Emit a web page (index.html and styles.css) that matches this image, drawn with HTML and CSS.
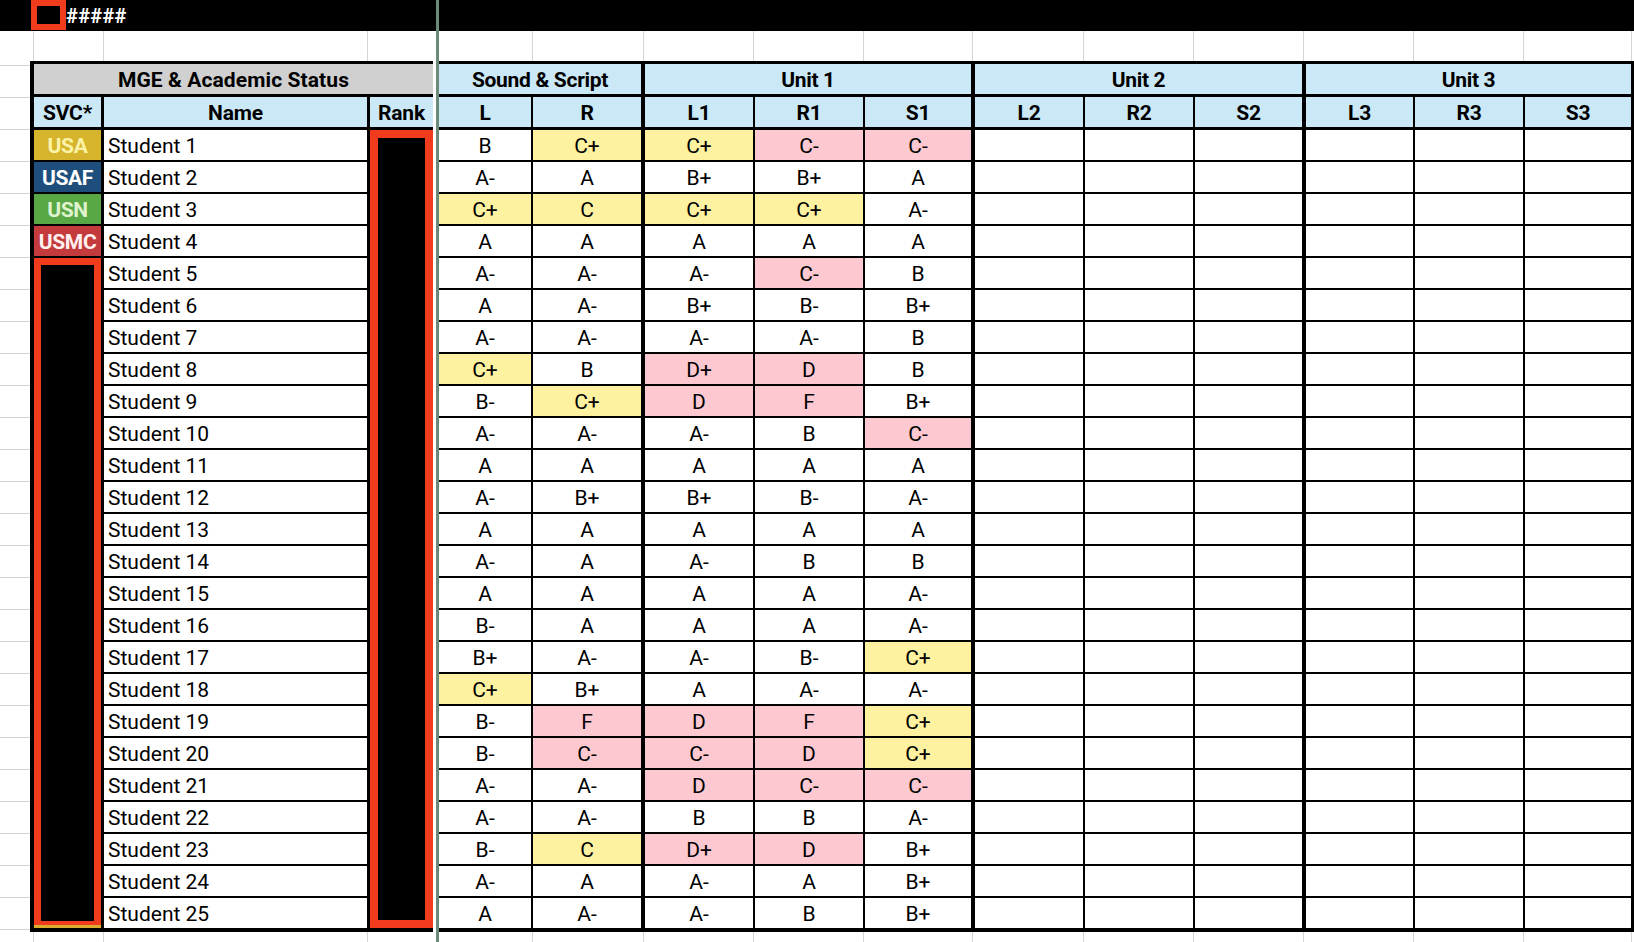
FILE: index.html
```html
<!DOCTYPE html>
<html lang="en">
<head>
<meta charset="utf-8">
<title>MGE &amp; Academic Status</title>
<link rel="stylesheet" href="styles.css">
</head>
<body>
<div class="sheet">
  <section class="pane pane-left">
    <div class="topbar"><span class="redact-mini"></span><span class="hashes">#####</span></div>
    <div class="pane-body">
      <div class="col-a"></div>
      <div class="mge">
        <div class="row"><div class="title">MGE &amp; Academic Status</div></div>
        <div class="row"><div class="hd svc-col">SVC*</div><div class="hd name-col">Name</div><div class="hd rank-col">Rank</div></div>
        <div class="row"><div class="svc usa">USA</div><div class="name">Student 1</div><div class="rank-redact"></div></div>
        <div class="row"><div class="svc usaf">USAF</div><div class="name">Student 2</div></div>
        <div class="row"><div class="svc usn">USN</div><div class="name">Student 3</div></div>
        <div class="row"><div class="svc usmc">USMC</div><div class="name">Student 4</div></div>
        <div class="row"><div class="svc-redact"></div><div class="name">Student 5</div></div>
        <div class="row"><div class="name">Student 6</div></div>
        <div class="row"><div class="name">Student 7</div></div>
        <div class="row"><div class="name">Student 8</div></div>
        <div class="row"><div class="name">Student 9</div></div>
        <div class="row"><div class="name">Student 10</div></div>
        <div class="row"><div class="name">Student 11</div></div>
        <div class="row"><div class="name">Student 12</div></div>
        <div class="row"><div class="name">Student 13</div></div>
        <div class="row"><div class="name">Student 14</div></div>
        <div class="row"><div class="name">Student 15</div></div>
        <div class="row"><div class="name">Student 16</div></div>
        <div class="row"><div class="name">Student 17</div></div>
        <div class="row"><div class="name">Student 18</div></div>
        <div class="row"><div class="name">Student 19</div></div>
        <div class="row"><div class="name">Student 20</div></div>
        <div class="row"><div class="name">Student 21</div></div>
        <div class="row"><div class="name">Student 22</div></div>
        <div class="row"><div class="name">Student 23</div></div>
        <div class="row"><div class="name">Student 24</div></div>
        <div class="row"><div class="name">Student 25</div></div>
      </div>
    </div>
  </section>

  <section class="pane pane-right">
    <div class="topbar"></div>
    <div class="pane-body">
      <div class="grades">
        <div class="row groups"><div class="span2">Sound &amp; Script</div><div class="span3">Unit 1</div><div class="span3">Unit 2</div><div class="span3">Unit 3</div></div>
        <div class="row heads"><div>L</div><div>R</div><div>L1</div><div>R1</div><div>S1</div><div>L2</div><div>R2</div><div>S2</div><div>L3</div><div>R3</div><div>S3</div></div>
        <div class="row"><div>B</div><div class="y">C+</div><div class="y">C+</div><div class="p">C-</div><div class="p">C-</div><div></div><div></div><div></div><div></div><div></div><div></div></div>
        <div class="row"><div>A-</div><div>A</div><div>B+</div><div>B+</div><div>A</div><div></div><div></div><div></div><div></div><div></div><div></div></div>
        <div class="row"><div class="y">C+</div><div class="y">C</div><div class="y">C+</div><div class="y">C+</div><div>A-</div><div></div><div></div><div></div><div></div><div></div><div></div></div>
        <div class="row"><div>A</div><div>A</div><div>A</div><div>A</div><div>A</div><div></div><div></div><div></div><div></div><div></div><div></div></div>
        <div class="row"><div>A-</div><div>A-</div><div>A-</div><div class="p">C-</div><div>B</div><div></div><div></div><div></div><div></div><div></div><div></div></div>
        <div class="row"><div>A</div><div>A-</div><div>B+</div><div>B-</div><div>B+</div><div></div><div></div><div></div><div></div><div></div><div></div></div>
        <div class="row"><div>A-</div><div>A-</div><div>A-</div><div>A-</div><div>B</div><div></div><div></div><div></div><div></div><div></div><div></div></div>
        <div class="row"><div class="y">C+</div><div>B</div><div class="p">D+</div><div class="p">D</div><div>B</div><div></div><div></div><div></div><div></div><div></div><div></div></div>
        <div class="row"><div>B-</div><div class="y">C+</div><div class="p">D</div><div class="p">F</div><div>B+</div><div></div><div></div><div></div><div></div><div></div><div></div></div>
        <div class="row"><div>A-</div><div>A-</div><div>A-</div><div>B</div><div class="p">C-</div><div></div><div></div><div></div><div></div><div></div><div></div></div>
        <div class="row"><div>A</div><div>A</div><div>A</div><div>A</div><div>A</div><div></div><div></div><div></div><div></div><div></div><div></div></div>
        <div class="row"><div>A-</div><div>B+</div><div>B+</div><div>B-</div><div>A-</div><div></div><div></div><div></div><div></div><div></div><div></div></div>
        <div class="row"><div>A</div><div>A</div><div>A</div><div>A</div><div>A</div><div></div><div></div><div></div><div></div><div></div><div></div></div>
        <div class="row"><div>A-</div><div>A</div><div>A-</div><div>B</div><div>B</div><div></div><div></div><div></div><div></div><div></div><div></div></div>
        <div class="row"><div>A</div><div>A</div><div>A</div><div>A</div><div>A-</div><div></div><div></div><div></div><div></div><div></div><div></div></div>
        <div class="row"><div>B-</div><div>A</div><div>A</div><div>A</div><div>A-</div><div></div><div></div><div></div><div></div><div></div><div></div></div>
        <div class="row"><div>B+</div><div>A-</div><div>A-</div><div>B-</div><div class="y">C+</div><div></div><div></div><div></div><div></div><div></div><div></div></div>
        <div class="row"><div class="y">C+</div><div>B+</div><div>A</div><div>A-</div><div>A-</div><div></div><div></div><div></div><div></div><div></div><div></div></div>
        <div class="row"><div>B-</div><div class="p">F</div><div class="p">D</div><div class="p">F</div><div class="y">C+</div><div></div><div></div><div></div><div></div><div></div><div></div></div>
        <div class="row"><div>B-</div><div class="p">C-</div><div class="p">C-</div><div class="p">D</div><div class="y">C+</div><div></div><div></div><div></div><div></div><div></div><div></div></div>
        <div class="row"><div>A-</div><div>A-</div><div class="p">D</div><div class="p">C-</div><div class="p">C-</div><div></div><div></div><div></div><div></div><div></div><div></div></div>
        <div class="row"><div>A-</div><div>A-</div><div>B</div><div>B</div><div>A-</div><div></div><div></div><div></div><div></div><div></div><div></div></div>
        <div class="row"><div>B-</div><div class="y">C</div><div class="p">D+</div><div class="p">D</div><div>B+</div><div></div><div></div><div></div><div></div><div></div><div></div></div>
        <div class="row"><div>A-</div><div>A</div><div>A-</div><div>A</div><div>B+</div><div></div><div></div><div></div><div></div><div></div><div></div></div>
        <div class="row"><div>A</div><div>A-</div><div>A-</div><div>B</div><div>B+</div><div></div><div></div><div></div><div></div><div></div><div></div></div>
      </div>
    </div>
  </section>
</div>
</body>
</html>
```

FILE: styles.css
```css
* { box-sizing: border-box; }

html, body {
  margin: 0;
  padding: 0;
}

body {
  --gl: linear-gradient(#d5d5d5, #d5d5d5);
  --ink: #000;
  --blue: #cbe8f7;
  --grey: #d0d0d0;
  --yellow: #fef2a0;
  --pink: #fdc8cf;
  --redact: #f03b1c;
  width: 1634px;
  height: 942px;
  overflow: hidden;
  background: #fff;
  color: var(--ink);
  font-family: Roboto, "Liberation Sans", Arial, sans-serif;
  font-size: 21px;
}

.sheet {
  display: flex;
  height: 942px;
}

.pane {
  display: flex;
  flex-direction: column;
}

.pane-left {
  flex: none;
  width: 439px;
  border-right: 3px solid #6c8a78;
  background:
    var(--gl) 33px 0 / 1px 100% no-repeat,
    var(--gl) 103px 0 / 1px 100% no-repeat,
    var(--gl) 367px 0 / 1px 100% no-repeat;
}

.pane-right {
  flex: 1;
  background:
    var(--gl) 93px 0 / 1px 100% no-repeat,
    var(--gl) 204px 0 / 1px 100% no-repeat,
    var(--gl) 314px 0 / 1px 100% no-repeat,
    var(--gl) 424px 0 / 1px 100% no-repeat,
    var(--gl) 533px 0 / 1px 100% no-repeat,
    var(--gl) 644px 0 / 1px 100% no-repeat,
    var(--gl) 754px 0 / 1px 100% no-repeat,
    var(--gl) 864px 0 / 1px 100% no-repeat,
    var(--gl) 974px 0 / 1px 100% no-repeat,
    var(--gl) 1084px 0 / 1px 100% no-repeat,
    var(--gl) 1192px 0 / 1px 100% no-repeat;
}

/* black bar across the top */
.topbar {
  flex: none;
  height: 31px;
  background: #000;
  display: flex;
  align-items: flex-start;
}

.redact-mini {
  margin-left: 31px;
  width: 35px;
  height: 30px;
  border: 6px solid var(--redact);
  background: #000;
}

.hashes {
  color: #fff;
  font-weight: 700;
  font-size: 20px;
  line-height: 32px;
  letter-spacing: 0.3px;
}

.pane-body {
  display: flex;
  align-items: flex-start;
  padding-top: 30px;
}

/* column A strip with sheet gridlines */
.col-a {
  flex: none;
  width: 30px;
  align-self: stretch;
  height: 871px;
  background: linear-gradient(#d5d5d5 1px, transparent 1px) 0 4px / 100% 32px;
}

.row { display: contents; }

/* ---------- left block ---------- */
.mge {
  display: grid;
  width: 403px;
  grid-template-columns: 70px 266px 63px;
  grid-template-rows: 33px 33px repeat(25, 32px);
  border-left: 4px solid var(--ink);
  border-top: 3px solid var(--ink);
  border-bottom: 2px solid var(--ink);
}

.mge .row > div {
  display: flex;
  align-items: center;
  justify-content: center;
  padding-top: 2px;
  background: #fff;
  border-bottom: 2px solid var(--ink);
  white-space: nowrap;
}

.mge .title {
  grid-column: 1 / -1;
  background: var(--grey) !important;
  border-bottom-width: 3px !important;
  font-weight: 700;
  font-size: 21px;
  letter-spacing: 0.1px;
}

.mge .hd {
  background: var(--blue) !important;
  border-bottom-width: 3px !important;
  font-weight: 700;
  font-size: 21px;
  letter-spacing: -0.2px;
}

.mge .svc-col,
.mge .svc,
.mge .svc-redact {
  grid-column: 1;
  border-right: 3px solid var(--ink);
}

.mge .name-col,
.mge .name {
  grid-column: 2;
  border-right: 3px solid var(--ink);
}

.mge .name {
  justify-content: flex-start !important;
  padding-left: 4px;
}

.mge .rank-col,
.mge .rank-redact {
  grid-column: 3;
}

.mge .svc {
  font-weight: 700;
  font-size: 21px;
  letter-spacing: -0.3px;
}

.mge .usa  { background: #d6b42c !important; color: #fbf4a8; }
.mge .usaf { background: #1e4f7c !important; color: #ffffff; }
.mge .usn  { background: #5aa845 !important; color: #dff3cf; }
.mge .usmc { background: #c33b3d !important; color: #fff0ef; }

.mge .rank-redact {
  grid-row: span 25;
  background: #000 !important;
  box-shadow: inset 0 0 0 8px var(--redact);
}

.mge .svc-redact {
  grid-row: span 21;
  background: #000 !important;
  box-shadow:
    inset 0 -3px 0 #dcae2f,
    inset 0 0 0 7px var(--redact);
}

/* ---------- grade block ---------- */
.grades {
  display: grid;
  width: 1195px;
  grid-template-columns: 94px 112px 110px 110px 110px 110px 110px 111px 109px 110px 106px;
  grid-template-rows: 33px 33px repeat(25, 32px);
  border-top: 3px solid var(--ink);
  border-right: 3px solid var(--ink);
  border-bottom: 2px solid var(--ink);
}

.grades .row > div {
  display: flex;
  align-items: center;
  justify-content: center;
  padding-top: 2px;
  background: #fff;
  border-right: 2px solid var(--ink);
  border-bottom: 2px solid var(--ink);
}

.grades .row > div:nth-child(2),
.grades .row > div:nth-child(5),
.grades .row > div:nth-child(8) {
  border-right-width: 4px;
}

.grades .row > div:nth-child(11) {
  border-right: 0;
}

.grades .groups > div,
.grades .heads > div {
  background: var(--blue);
  border-bottom-width: 3px;
  font-weight: 700;
  letter-spacing: -0.3px;
}

.grades .groups > div { border-right-width: 4px; }
.grades .groups > div:last-child { border-right: 0; }

.grades .span2 { grid-column: span 2; }
.grades .span3 { grid-column: span 3; }

.grades .row > .y { background: var(--yellow); }
.grades .row > .p { background: var(--pink); }
```
